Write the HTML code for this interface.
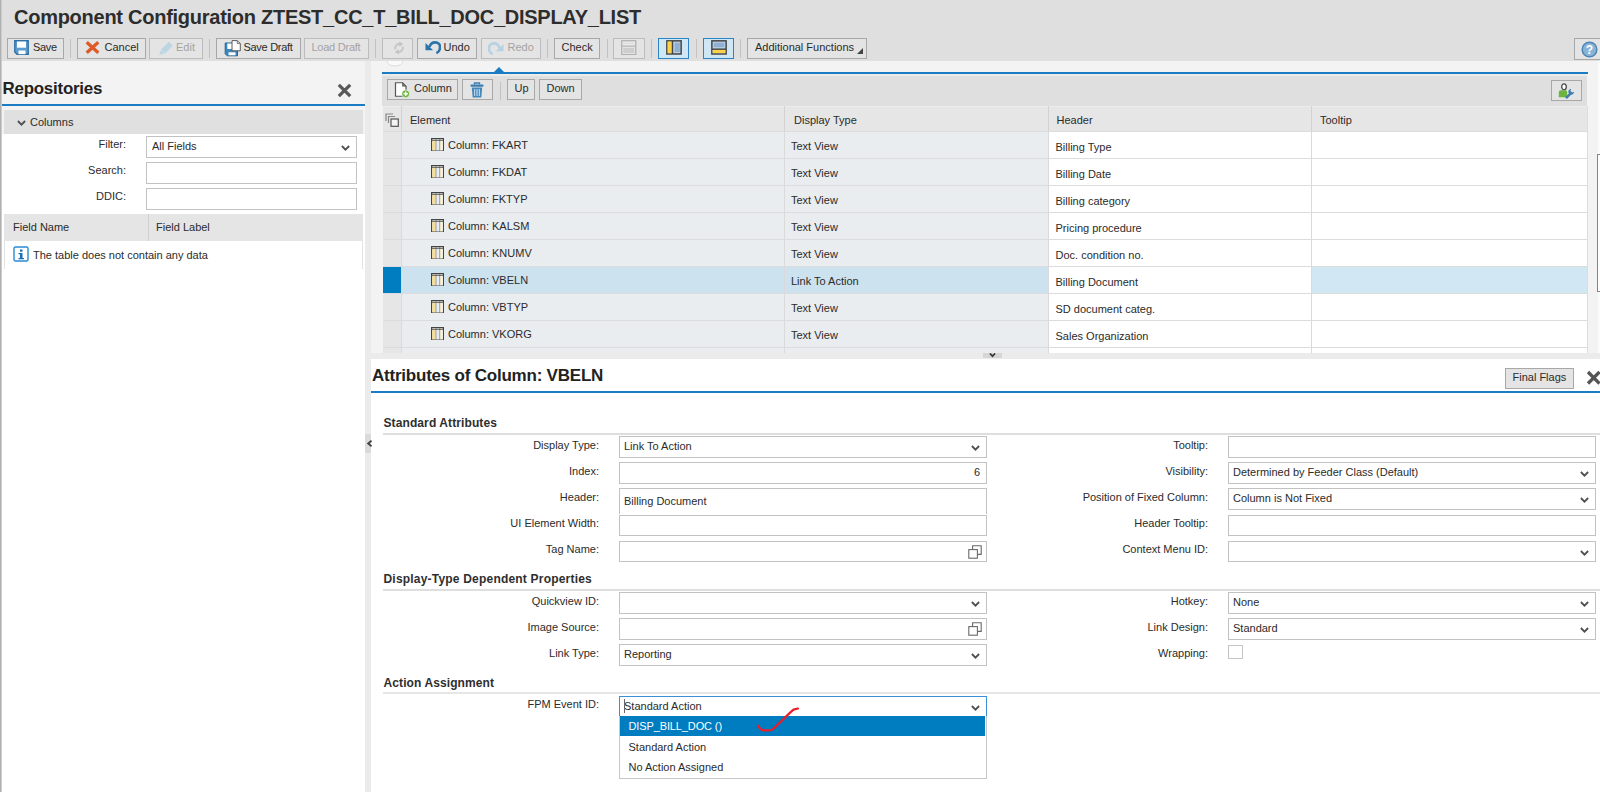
<!DOCTYPE html>
<html><head><meta charset="utf-8"><title>Component Configuration</title>
<style>
*{box-sizing:border-box;margin:0;padding:0}
html,body{width:1600px;height:792px;overflow:hidden}
body{background:#f3f3f3;font-family:"Liberation Sans",sans-serif;font-size:11px;color:#2b2b2b;position:relative}
.a{position:absolute}
.t{position:absolute;white-space:nowrap;line-height:14px;height:14px}
.btn{position:absolute;top:38px;height:21px;border:1px solid #a8a8a8;background:#e4e4e4;white-space:nowrap;line-height:17px;font-size:11px;color:#2b2b2b}
.btn span{position:absolute;top:0}
.btn.dis{border-color:#bcbcbc;color:#a3a3a3}
.btn.on{background:#cfe6f5;border-color:#2a84c6}
.sep{position:absolute;top:39px;width:1px;height:19px;background:#c2c2c2}
.inp{position:absolute;height:22px;border:1px solid #c2c2c2;background:#fff;line-height:18px;font-size:11px;padding-left:4px;white-space:nowrap}
.lbl{position:absolute;text-align:right;white-space:nowrap;line-height:14px;font-size:11px}
.sec{position:absolute;font-weight:bold;font-size:12px;letter-spacing:0.1px;white-space:nowrap;line-height:14px;color:#2e2e2e}
.hl{position:absolute;height:2px;background:#dedede}
</style></head><body>
<!-- header -->
<div class="a" style="left:0px;top:0px;width:1600px;height:61px;background:#dfdfdf"></div>
<div class="a" style="left:0px;top:0px;width:1px;height:792px;background:#b0b0b0"></div>
<div class="a" style="left:1px;top:0px;width:1px;height:792px;background:#cdcdcd"></div>
<div class="t" style="left:14px;top:4px;font-size:20px;font-weight:bold;line-height:26px;height:26px;color:#2d2d2d;letter-spacing:-0.260px">Component Configuration ZTEST_CC_T_BILL_DOC_DISPLAY_LIST</div>
<div class="btn" style="left:7px;top:38px;width:57px;height:21px"><svg class="a" style="left:6.25px;top:1.4px" width="15" height="15" viewBox="0 0 15 15"><path d="M0.750 0.750h13.500v13.500H3l-2.250-2.250z" fill="#5b9bd0" stroke="#2f6fa3" stroke-width="1.300"/><rect x="3" y="1.500" width="9" height="6.200" fill="#fff"/><rect x="4.500" y="10.500" width="7" height="3.700" fill="#fff"/></svg><span style="left:25px"><span style="position:static;letter-spacing:-0.350px">Save</span></span></div>
<div class="sep" style="left:70px;top:39px;height:19px"></div>
<div class="btn" style="left:77px;top:38px;width:69px;height:21px"><svg class="a" style="left:7.3px;top:2.3px" width="15" height="13" viewBox="0 0 15 13"><path d="M1.700 1.200L13.300 11.800M13.300 1.200L1.700 11.800" stroke="#dd5a2b" stroke-width="3.300"/></svg><span style="left:26.5px">Cancel</span></div>
<div class="btn dis" style="left:149px;top:38px;width:54px;height:21px"><svg class="a" style="left:7.5px;top:1.5px" width="16" height="15" viewBox="0 0 16 15"><path d="M1.200 13.800l1.800-5.300L10.800 0.700l4 4L7 12.500z" fill="#bdd5e3"/><path d="M3 8.500l4 4" stroke="#d9e6ee" stroke-width="0.800"/></svg><span style="left:26px">Edit</span></div>
<div class="sep" style="left:209px;top:39px;height:19px"></div>
<div class="btn" style="left:216px;top:38px;width:85px;height:21px"><svg class="a" style="left:6.5px;top:1px" width="17" height="17" viewBox="0 0 17 17"><path d="M1.200 3h12.300v12.800H3.200l-2-2z" fill="#3f86bd" stroke="#246495" stroke-width="1"/><rect x="3.300" y="3.500" width="5" height="5.500" fill="#fff"/><rect x="4.500" y="12.300" width="7" height="3" fill="#fff"/><path d="M8 0.600h5.300l3 3v7.200H8z" fill="#fff" stroke="#5a5a5a" stroke-width="1"/><path d="M13.300 0.600v3h3" fill="none" stroke="#5a5a5a" stroke-width="0.800"/></svg><span style="left:26.5px"><span style="position:static;letter-spacing:-0.300px">Save Draft</span></span></div>
<div class="btn dis" style="left:304px;top:38px;width:65px;height:21px"><span style="left:6.5px"><span style="position:static;letter-spacing:-0.250px">Load Draft</span></span></div>
<div class="sep" style="left:375px;top:39px;height:19px"></div>
<div class="btn dis" style="left:382px;top:38px;width:31px;height:21px"><svg class="a" style="left:9.5px;top:2px" width="12" height="14" viewBox="0 0 12 14"><path d="M2.300 8.300A4 4.300 0 0 1 7.500 3.200" fill="none" stroke="#c4c4c4" stroke-width="1.900"/><path d="M6.300 0.300l3.700 2.800-3.700 2.800z" fill="#c4c4c4"/><path d="M9.700 5.700A4 4.300 0 0 1 4.500 10.800" fill="none" stroke="#c4c4c4" stroke-width="1.900"/><path d="M5.700 13.700l-3.700-2.800 3.700-2.800z" fill="#c4c4c4"/></svg></div>
<div class="btn" style="left:417px;top:38px;width:60px;height:21px"><svg class="a" style="left:6.5px;top:1px" width="16" height="14" viewBox="0 0 16 14"><path d="M4.500 7C6 0.800 15.300 0.600 15 7.500C14.700 11 13 12.500 11.300 13" fill="none" stroke="#2b74ab" stroke-width="2.600"/><path d="M0.500 3v7.200h7.600z" fill="#2b74ab"/></svg><span style="left:25.5px">Undo</span></div>
<div class="btn dis" style="left:481px;top:38px;width:60px;height:21px"><svg class="a" style="left:5.5px;top:1.5px" width="16" height="14" viewBox="0 0 16 14"><path d="M11.500 7C10 0.800 0.700 0.600 1 7.500C1.300 11 3 12.500 4.700 13" fill="none" stroke="#b7d1e2" stroke-width="2.600"/><path d="M15.500 3v7.200h-7.600z" fill="#b7d1e2"/></svg><span style="left:25.5px">Redo</span></div>
<div class="sep" style="left:547px;top:39px;height:19px"></div>
<div class="btn" style="left:554px;top:38px;width:46px;height:21px"><span style="left:6.5px">Check</span></div>
<div class="sep" style="left:607px;top:39px;height:19px"></div>
<div class="btn dis" style="left:613px;top:38px;width:32px;height:21px"><svg class="a" style="left:7px;top:0.8px" width="15.5" height="15.5" viewBox="0 0 16 16"><rect x="0.750" y="0.750" width="14.500" height="14.300" fill="#e9e9e9" stroke="#b0b0b0" stroke-width="1.300"/><rect x="2.300" y="8" width="11.400" height="5.500" fill="#cdcdcd"/><path d="M0.500 6.300h15" stroke="#b0b0b0" stroke-width="1.200"/><path d="M2 3.500h12" stroke="#dcdcdc" stroke-width="1"/></svg></div>
<div class="sep" style="left:651px;top:39px;height:19px"></div>
<div class="btn on" style="left:658px;top:38px;width:31px;height:21px"><svg class="a" style="left:6.5px;top:0.8px" width="16" height="15" viewBox="0 0 17 16"><rect x="0.900" y="0.900" width="15.200" height="14" fill="#c3d6ea" stroke="#444" stroke-width="1.600"/><rect x="1.700" y="1.700" width="4.300" height="12.400" fill="#fbd24a"/><path d="M6.900 1v14" stroke="#444" stroke-width="1.600"/><rect x="9" y="2.800" width="5.800" height="10.200" fill="#8fb0d3"/></svg></div>
<div class="sep" style="left:696px;top:39px;height:19px"></div>
<div class="btn on" style="left:703px;top:38px;width:31px;height:21px"><svg class="a" style="left:6.5px;top:0.8px" width="16" height="15" viewBox="0 0 17 16"><rect x="0.900" y="0.900" width="15.200" height="14" fill="#c3d6ea" stroke="#444" stroke-width="1.600"/><rect x="2.800" y="2.800" width="11.400" height="5" fill="#8fb0d3"/><path d="M1 9.800h15" stroke="#444" stroke-width="1.600"/><rect x="1.700" y="10.600" width="13.600" height="3.400" fill="#fbd24a"/></svg></div>
<div class="sep" style="left:740px;top:39px;height:19px"></div>
<div class="btn" style="left:747px;top:38px;width:120px;height:21px"><svg class="a" style="left:108.5px;top:9.3px" width="6" height="6" viewBox="0 0 6 6"><path d="M6 0v6H0z" fill="#444"/></svg><span style="left:7px">Additional Functions</span></div>
<div class="btn" style="left:1574px;top:38px;width:27px;height:22px"><svg class="a" style="left:6px;top:1.5px" width="17" height="17" viewBox="0 0 17 17"><circle cx="8.500" cy="8.500" r="7.300" fill="#8ab4d6" stroke="#4d85b5" stroke-width="1.500"/><text x="8.500" y="13" font-size="12" font-weight="bold" text-anchor="middle" fill="#fff" font-family="Liberation Sans, sans-serif">?</text></svg></div>
<!-- left panel -->
<div class="a" style="left:2px;top:134px;width:363px;height:658px;background:#fff"></div>
<div class="a" style="left:365px;top:61px;width:6px;height:731px;background:#ebebeb"></div>
<div class="t" style="left:2.5px;top:78px;font-size:16.900px;font-weight:bold;line-height:22px;height:22px;color:#222;letter-spacing:-0.220px">Repositories</div>
<svg class="a" style="left:337.3px;top:82.5px" width="15" height="15" viewBox="0 0 15 15"><path d="M1.800 1.800l11.400 11.400M13.200 1.800L1.800 13.200" stroke="#595959" stroke-width="3.200"/></svg>
<div class="a" style="left:2px;top:104px;width:363px;height:2px;background:#1b7cc3"></div>
<div class="a" style="left:4px;top:110px;width:359px;height:24px;background:#e0e0e0"></div>
<svg class="a" style="left:17px;top:120px" width="9" height="6.5" viewBox="0 0 9 6.5"><path d="M0.900 1l3.600 3.600L8.100 1" fill="none" stroke="#505050" stroke-width="1.850"/></svg>
<div class="t" style="left:30px;top:115px">Columns</div>
<div class="lbl" style="left:26px;width:100px;top:137px">Filter:</div>
<div class="inp" style="left:146px;top:136px;width:211px;padding-left:5px">All Fields</div>
<svg class="a" style="left:340.7px;top:144.8px" width="9" height="6.5" viewBox="0 0 9 6.5"><path d="M0.900 1l3.600 3.600L8.100 1" fill="none" stroke="#505050" stroke-width="1.850"/></svg>
<div class="lbl" style="left:26px;width:100px;top:163px">Search:</div>
<div class="inp" style="left:146px;top:162px;width:211px"></div>
<div class="lbl" style="left:26px;width:100px;top:189px">DDIC:</div>
<div class="inp" style="left:146px;top:188px;width:211px"></div>
<div class="a" style="left:4px;top:214px;width:359px;height:27px;background:#e5e5e5"></div>
<div class="a" style="left:148px;top:214px;width:1px;height:27px;background:#d0d0d0"></div>
<div class="t" style="left:13px;top:220px">Field Name</div>
<div class="t" style="left:156px;top:220px">Field Label</div>
<div class="a" style="left:4px;top:241px;width:1px;height:28px;background:#e3e3e3"></div>
<div class="a" style="left:362px;top:241px;width:1px;height:28px;background:#e3e3e3"></div>
<svg class="a" style="left:13px;top:246.3px" width="16" height="16" viewBox="0 0 16 16"><rect x="1" y="1" width="14" height="14" rx="1.500" fill="#fff" stroke="#2a8ad4" stroke-width="1.400"/><rect x="7" y="3.500" width="2.500" height="2.200" fill="#1b6fb5"/><path d="M5.500 7h4v5h1.500v1.300h-5.500v-1.300h1.500v-3.700h-1.500z" fill="#1b6fb5"/></svg>
<div class="t" style="left:33px;top:247.5px">The table does not contain any data</div>
<!-- list panel -->
<div class="a" style="left:382px;top:71.5px;width:1206px;height:2px;background:#1b7cc3"></div>
<svg class="a" style="left:493px;top:66.5px" width="12" height="6" viewBox="0 0 12 6"><path d="M0 6L6 0l6 6z" fill="#1b7cc3"/></svg>
<svg class="a" style="left:386px;top:61px" width="18" height="6" viewBox="0 0 18 6"><path d="M1 0a8 5 0 0 0 16 0" fill="#fafafa" stroke="#dcdcdc" stroke-width="1"/></svg>
<div class="a" style="left:382px;top:73.5px;width:1205px;height:2px;background:#ececec"></div>
<div class="a" style="left:382px;top:75.5px;width:1205px;height:30.5px;background:#dfdfdf"></div>
<div class="btn" style="left:387px;top:79px;width:71px;height:21px"><svg class="a" style="left:6px;top:1.5px" width="16" height="16" viewBox="0 0 16 16"><path d="M1.500 0.750h7l3.500 3.500v10h-10.500z" fill="#fff" stroke="#555" stroke-width="1.200"/><path d="M8.500 0.750v3.500h3.500z" fill="#777" stroke="#555" stroke-width="0.600"/><circle cx="11.700" cy="11.800" r="3.900" fill="#6db33f" stroke="#fff" stroke-width="0.600"/><path d="M11.700 9.600v4.400M9.500 11.800h4.400" stroke="#fff" stroke-width="1.400"/></svg><span style="left:26px">Column</span></div>
<div class="btn" style="left:462px;top:79px;width:31px;height:21px"><svg class="a" style="left:7px;top:1.5px" width="14" height="16" viewBox="0 0 14 16"><path d="M4.500 2.500v-1.500h5v1.500" fill="none" stroke="#3b7db0" stroke-width="1.400"/><rect x="0.500" y="2.500" width="13" height="2.200" rx="0.800" fill="#3b7db0"/><path d="M1.800 5.500h10.400l-0.900 10h-8.600z" fill="#4487ba"/><path d="M4.700 7v7M7 7v7M9.300 7v7" stroke="#cfe3f3" stroke-width="1"/></svg></div>
<div class="sep" style="left:500px;top:82px;height:18px"></div>
<div class="btn" style="left:507px;top:79px;width:28px;height:21px"><span style="left:6.5px">Up</span></div>
<div class="btn" style="left:539px;top:79px;width:43px;height:21px"><span style="left:6.5px">Down</span></div>
<div class="btn" style="left:1551px;top:80px;width:31px;height:21px"><svg class="a" style="left:6px;top:1.5px" width="17" height="17" viewBox="0 0 17 17"><ellipse cx="6" cy="3.800" rx="2.300" ry="3" fill="#fff" stroke="#444" stroke-width="1.300"/><path d="M0.800 14.300v-5a2 2 0 0 1 2-2h4.400a2 2 0 0 1 2 2v5z" fill="#6db33f"/><path d="M8 15.200l5-5" stroke="#3b7db0" stroke-width="2.400"/><path d="M16 8.800a2.800 2.800 0 1 1-2.800-2.800l-0.800 1.700 1.700 1.700z" fill="#3b7db0"/></svg></div>
<div class="a" style="left:383px;top:106px;width:1204px;height:26px;background:#e6e6e6"></div>
<div class="a" style="left:383px;top:105.5px;width:1204px;height:1px;background:#ececec"></div>
<div class="a" style="left:401px;top:106px;width:1px;height:26px;background:#d2d2d2"></div>
<div class="a" style="left:784px;top:106px;width:1px;height:26px;background:#d2d2d2"></div>
<div class="a" style="left:1048px;top:106px;width:1px;height:26px;background:#d2d2d2"></div>
<div class="a" style="left:1311px;top:106px;width:1px;height:26px;background:#d2d2d2"></div>
<svg class="a" style="left:385px;top:113px" width="14" height="14" viewBox="0 0 14 14"><path d="M1 8V1h7" fill="none" stroke="#888" stroke-width="1.200"/><path d="M3.500 10V3.500h6.500" fill="none" stroke="#888" stroke-width="1.200"/><rect x="6" y="6" width="7.300" height="7.300" fill="#f4f4f4" stroke="#555" stroke-width="1.200"/></svg>
<div class="t" style="left:410px;top:113px">Element</div>
<div class="t" style="left:794px;top:113px">Display Type</div>
<div class="t" style="left:1056.5px;top:113px">Header</div>
<div class="t" style="left:1320px;top:113px">Tooltip</div>
<div class="a" style="left:383px;top:132px;width:18px;height:26px;background:#e6e6e6"></div>
<div class="a" style="left:402px;top:132px;width:382px;height:26px;background:#e9edf0"></div>
<div class="a" style="left:785px;top:132px;width:263px;height:26px;background:#e9edf0"></div>
<div class="a" style="left:1049px;top:132px;width:262px;height:26px;background:#fff"></div>
<div class="a" style="left:1312px;top:132px;width:275px;height:26px;background:#fff"></div>
<svg class="a" style="left:431px;top:137.8px" width="13" height="13.5" viewBox="0 0 13 13.5"><rect x="0.600" y="0.600" width="11.800" height="12.300" fill="#fffdf3" stroke="#444" stroke-width="1.200"/><rect x="1.300" y="2.800" width="3.400" height="9.500" fill="#f6df95"/><rect x="5.300" y="2.800" width="3.100" height="9.500" fill="#e6ecf5"/><rect x="9" y="2.800" width="2.800" height="9.500" fill="#faf3d6"/><path d="M5 1v11.500M8.700 1v11.500" stroke="#777" stroke-width="0.700"/><path d="M1 2.300h11" stroke="#444" stroke-width="0.900"/></svg>
<div class="t" style="left:448px;top:138px">Column: FKART</div>
<div class="t" style="left:791px;top:139px">Text View</div>
<div class="t" style="left:1055.5px;top:140px">Billing Type</div>
<div class="a" style="left:383px;top:159px;width:18px;height:26px;background:#e6e6e6"></div>
<div class="a" style="left:402px;top:159px;width:382px;height:26px;background:#e9edf0"></div>
<div class="a" style="left:785px;top:159px;width:263px;height:26px;background:#e9edf0"></div>
<div class="a" style="left:1049px;top:159px;width:262px;height:26px;background:#fff"></div>
<div class="a" style="left:1312px;top:159px;width:275px;height:26px;background:#fff"></div>
<svg class="a" style="left:431px;top:164.8px" width="13" height="13.5" viewBox="0 0 13 13.5"><rect x="0.600" y="0.600" width="11.800" height="12.300" fill="#fffdf3" stroke="#444" stroke-width="1.200"/><rect x="1.300" y="2.800" width="3.400" height="9.500" fill="#f6df95"/><rect x="5.300" y="2.800" width="3.100" height="9.500" fill="#e6ecf5"/><rect x="9" y="2.800" width="2.800" height="9.500" fill="#faf3d6"/><path d="M5 1v11.500M8.700 1v11.500" stroke="#777" stroke-width="0.700"/><path d="M1 2.300h11" stroke="#444" stroke-width="0.900"/></svg>
<div class="t" style="left:448px;top:165px">Column: FKDAT</div>
<div class="t" style="left:791px;top:166px">Text View</div>
<div class="t" style="left:1055.5px;top:167px">Billing Date</div>
<div class="a" style="left:383px;top:186px;width:18px;height:26px;background:#e6e6e6"></div>
<div class="a" style="left:402px;top:186px;width:382px;height:26px;background:#e9edf0"></div>
<div class="a" style="left:785px;top:186px;width:263px;height:26px;background:#e9edf0"></div>
<div class="a" style="left:1049px;top:186px;width:262px;height:26px;background:#fff"></div>
<div class="a" style="left:1312px;top:186px;width:275px;height:26px;background:#fff"></div>
<svg class="a" style="left:431px;top:191.8px" width="13" height="13.5" viewBox="0 0 13 13.5"><rect x="0.600" y="0.600" width="11.800" height="12.300" fill="#fffdf3" stroke="#444" stroke-width="1.200"/><rect x="1.300" y="2.800" width="3.400" height="9.500" fill="#f6df95"/><rect x="5.300" y="2.800" width="3.100" height="9.500" fill="#e6ecf5"/><rect x="9" y="2.800" width="2.800" height="9.500" fill="#faf3d6"/><path d="M5 1v11.500M8.700 1v11.500" stroke="#777" stroke-width="0.700"/><path d="M1 2.300h11" stroke="#444" stroke-width="0.900"/></svg>
<div class="t" style="left:448px;top:192px">Column: FKTYP</div>
<div class="t" style="left:791px;top:193px">Text View</div>
<div class="t" style="left:1055.5px;top:194px">Billing category</div>
<div class="a" style="left:383px;top:213px;width:18px;height:26px;background:#e6e6e6"></div>
<div class="a" style="left:402px;top:213px;width:382px;height:26px;background:#e9edf0"></div>
<div class="a" style="left:785px;top:213px;width:263px;height:26px;background:#e9edf0"></div>
<div class="a" style="left:1049px;top:213px;width:262px;height:26px;background:#fff"></div>
<div class="a" style="left:1312px;top:213px;width:275px;height:26px;background:#fff"></div>
<svg class="a" style="left:431px;top:218.8px" width="13" height="13.5" viewBox="0 0 13 13.5"><rect x="0.600" y="0.600" width="11.800" height="12.300" fill="#fffdf3" stroke="#444" stroke-width="1.200"/><rect x="1.300" y="2.800" width="3.400" height="9.500" fill="#f6df95"/><rect x="5.300" y="2.800" width="3.100" height="9.500" fill="#e6ecf5"/><rect x="9" y="2.800" width="2.800" height="9.500" fill="#faf3d6"/><path d="M5 1v11.500M8.700 1v11.500" stroke="#777" stroke-width="0.700"/><path d="M1 2.300h11" stroke="#444" stroke-width="0.900"/></svg>
<div class="t" style="left:448px;top:219px">Column: KALSM</div>
<div class="t" style="left:791px;top:220px">Text View</div>
<div class="t" style="left:1055.5px;top:221px">Pricing procedure</div>
<div class="a" style="left:383px;top:240px;width:18px;height:26px;background:#e6e6e6"></div>
<div class="a" style="left:402px;top:240px;width:382px;height:26px;background:#e9edf0"></div>
<div class="a" style="left:785px;top:240px;width:263px;height:26px;background:#e9edf0"></div>
<div class="a" style="left:1049px;top:240px;width:262px;height:26px;background:#fff"></div>
<div class="a" style="left:1312px;top:240px;width:275px;height:26px;background:#fff"></div>
<svg class="a" style="left:431px;top:245.8px" width="13" height="13.5" viewBox="0 0 13 13.5"><rect x="0.600" y="0.600" width="11.800" height="12.300" fill="#fffdf3" stroke="#444" stroke-width="1.200"/><rect x="1.300" y="2.800" width="3.400" height="9.500" fill="#f6df95"/><rect x="5.300" y="2.800" width="3.100" height="9.500" fill="#e6ecf5"/><rect x="9" y="2.800" width="2.800" height="9.500" fill="#faf3d6"/><path d="M5 1v11.500M8.700 1v11.500" stroke="#777" stroke-width="0.700"/><path d="M1 2.300h11" stroke="#444" stroke-width="0.900"/></svg>
<div class="t" style="left:448px;top:246px">Column: KNUMV</div>
<div class="t" style="left:791px;top:247px">Text View</div>
<div class="t" style="left:1055.5px;top:248px">Doc. condition no.</div>
<div class="a" style="left:383px;top:267px;width:18px;height:26px;background:#007cc0"></div>
<div class="a" style="left:402px;top:267px;width:382px;height:26px;background:#cce2ef"></div>
<div class="a" style="left:785px;top:267px;width:263px;height:26px;background:#cce2ef"></div>
<div class="a" style="left:1049px;top:267px;width:262px;height:26px;background:#fff"></div>
<div class="a" style="left:1312px;top:267px;width:275px;height:26px;background:#d1e8f4"></div>
<svg class="a" style="left:431px;top:272.8px" width="13" height="13.5" viewBox="0 0 13 13.5"><rect x="0.600" y="0.600" width="11.800" height="12.300" fill="#fffdf3" stroke="#444" stroke-width="1.200"/><rect x="1.300" y="2.800" width="3.400" height="9.500" fill="#f6df95"/><rect x="5.300" y="2.800" width="3.100" height="9.500" fill="#e6ecf5"/><rect x="9" y="2.800" width="2.800" height="9.500" fill="#faf3d6"/><path d="M5 1v11.500M8.700 1v11.500" stroke="#777" stroke-width="0.700"/><path d="M1 2.300h11" stroke="#444" stroke-width="0.900"/></svg>
<div class="t" style="left:448px;top:273px">Column: VBELN</div>
<div class="t" style="left:791px;top:274px">Link To Action</div>
<div class="t" style="left:1055.5px;top:275px">Billing Document</div>
<div class="a" style="left:383px;top:294px;width:18px;height:26px;background:#e6e6e6"></div>
<div class="a" style="left:402px;top:294px;width:382px;height:26px;background:#e9edf0"></div>
<div class="a" style="left:785px;top:294px;width:263px;height:26px;background:#e9edf0"></div>
<div class="a" style="left:1049px;top:294px;width:262px;height:26px;background:#fff"></div>
<div class="a" style="left:1312px;top:294px;width:275px;height:26px;background:#fff"></div>
<svg class="a" style="left:431px;top:299.8px" width="13" height="13.5" viewBox="0 0 13 13.5"><rect x="0.600" y="0.600" width="11.800" height="12.300" fill="#fffdf3" stroke="#444" stroke-width="1.200"/><rect x="1.300" y="2.800" width="3.400" height="9.500" fill="#f6df95"/><rect x="5.300" y="2.800" width="3.100" height="9.500" fill="#e6ecf5"/><rect x="9" y="2.800" width="2.800" height="9.500" fill="#faf3d6"/><path d="M5 1v11.500M8.700 1v11.500" stroke="#777" stroke-width="0.700"/><path d="M1 2.300h11" stroke="#444" stroke-width="0.900"/></svg>
<div class="t" style="left:448px;top:300px">Column: VBTYP</div>
<div class="t" style="left:791px;top:301px">Text View</div>
<div class="t" style="left:1055.5px;top:302px">SD document categ.</div>
<div class="a" style="left:383px;top:321px;width:18px;height:26px;background:#e6e6e6"></div>
<div class="a" style="left:402px;top:321px;width:382px;height:26px;background:#e9edf0"></div>
<div class="a" style="left:785px;top:321px;width:263px;height:26px;background:#e9edf0"></div>
<div class="a" style="left:1049px;top:321px;width:262px;height:26px;background:#fff"></div>
<div class="a" style="left:1312px;top:321px;width:275px;height:26px;background:#fff"></div>
<svg class="a" style="left:431px;top:326.8px" width="13" height="13.5" viewBox="0 0 13 13.5"><rect x="0.600" y="0.600" width="11.800" height="12.300" fill="#fffdf3" stroke="#444" stroke-width="1.200"/><rect x="1.300" y="2.800" width="3.400" height="9.500" fill="#f6df95"/><rect x="5.300" y="2.800" width="3.100" height="9.500" fill="#e6ecf5"/><rect x="9" y="2.800" width="2.800" height="9.500" fill="#faf3d6"/><path d="M5 1v11.500M8.700 1v11.500" stroke="#777" stroke-width="0.700"/><path d="M1 2.300h11" stroke="#444" stroke-width="0.900"/></svg>
<div class="t" style="left:448px;top:327px">Column: VKORG</div>
<div class="t" style="left:791px;top:328px">Text View</div>
<div class="t" style="left:1055.5px;top:329px">Sales Organization</div>
<div class="a" style="left:383px;top:348px;width:18px;height:5px;background:#e6e6e6"></div>
<div class="a" style="left:402px;top:348px;width:382px;height:5px;background:#e9edf0"></div>
<div class="a" style="left:785px;top:348px;width:263px;height:5px;background:#e9edf0"></div>
<div class="a" style="left:1049px;top:348px;width:262px;height:5px;background:#fff"></div>
<div class="a" style="left:1312px;top:348px;width:275px;height:5px;background:#fff"></div>
<div class="a" style="left:383px;top:131px;width:1204px;height:1px;background:#dcdcdc"></div>
<div class="a" style="left:383px;top:158px;width:1204px;height:1px;background:#dcdcdc"></div>
<div class="a" style="left:383px;top:185px;width:1204px;height:1px;background:#dcdcdc"></div>
<div class="a" style="left:383px;top:212px;width:1204px;height:1px;background:#dcdcdc"></div>
<div class="a" style="left:383px;top:239px;width:1204px;height:1px;background:#dcdcdc"></div>
<div class="a" style="left:383px;top:266px;width:1204px;height:1px;background:#dcdcdc"></div>
<div class="a" style="left:383px;top:293px;width:1204px;height:1px;background:#dcdcdc"></div>
<div class="a" style="left:383px;top:320px;width:1204px;height:1px;background:#dcdcdc"></div>
<div class="a" style="left:383px;top:347px;width:1204px;height:1px;background:#dcdcdc"></div>
<div class="a" style="left:401px;top:132px;width:1px;height:221px;background:#dadada"></div>
<div class="a" style="left:784px;top:132px;width:1px;height:221px;background:#dadada"></div>
<div class="a" style="left:1048px;top:132px;width:1px;height:221px;background:#dadada"></div>
<div class="a" style="left:1311px;top:132px;width:1px;height:221px;background:#dadada"></div>
<div class="a" style="left:1587px;top:106px;width:1px;height:247px;background:#dcdcdc"></div>
<div class="a" style="left:1597.5px;top:61px;width:3px;height:292px;background:#fbfbfb"></div>
<div class="a" style="left:1597px;top:154px;width:4px;height:138px;background:#fff;border:1px solid #858585"></div>
<div class="a" style="left:371px;top:353px;width:1229px;height:6px;background:#ebebeb"></div>
<div class="a" style="left:983px;top:353px;width:19px;height:5px;background:#d6d6d6"></div>
<svg class="a" style="left:988px;top:353px" width="9" height="5" viewBox="0 0 9 5"><path d="M1.900 0.500l2.600 2.700 2.600-2.700" fill="none" stroke="#3a3a3a" stroke-width="1.700"/></svg>
<!-- attributes panel -->
<div class="a" style="left:371px;top:359px;width:1229px;height:433px;background:#fff"></div>
<div class="a" style="left:365px;top:434px;width:6px;height:19px;background:#dadada"></div>
<svg class="a" style="left:366.5px;top:439.5px" width="5" height="7" viewBox="0 0 5 7"><path d="M4.600 0.700L1.300 3.500l3.300 2.800" fill="none" stroke="#444" stroke-width="1.900"/></svg>
<div class="t" style="left:372px;top:365px;font-size:17px;font-weight:bold;line-height:22px;height:22px;color:#222;letter-spacing:-0.220px">Attributes of Column: VBELN</div>
<div class="a" style="left:371px;top:391px;width:1229px;height:2px;background:#1b7cc3"></div>
<div class="btn" style="left:1505px;top:368px;width:69px;height:21px"><span style="left:6.5px">Final Flags</span></div>
<svg class="a" style="left:1586px;top:370px" width="16" height="15" viewBox="0 0 16 15"><path d="M2 2l11.500 11.500M13.500 2L2 13.500" stroke="#555" stroke-width="3.300"/></svg>
<div class="sec" style="left:383.500px;top:416px;letter-spacing:0.1px">Standard Attributes</div>
<div class="hl" style="left:383px;top:433px;width:1217px;background:#dedede"></div>
<div class="lbl" style="left:399px;width:200px;top:438px">Display Type:</div>
<div class="inp" style="left:619px;top:436px;width:368px;height:22px">Link To Action</div>
<svg class="a" style="left:970.7px;top:444.8px" width="9" height="6.5" viewBox="0 0 9 6.5"><path d="M0.900 1l3.600 3.600L8.100 1" fill="none" stroke="#505050" stroke-width="1.850"/></svg>
<div class="lbl" style="left:399px;width:200px;top:464px">Index:</div>
<div class="inp" style="left:619px;top:462px;width:368px;height:22px;text-align:right;padding-right:6px">6</div>
<div class="lbl" style="left:399px;width:200px;top:490px">Header:</div>
<div class="inp" style="left:619px;top:488px;width:368px;height:26px;border-bottom:none;padding-top:3px">Billing Document</div>
<div class="lbl" style="left:399px;width:200px;top:516px">UI Element Width:</div>
<div class="inp" style="left:619px;top:515px;width:368px;height:21px"></div>
<div class="lbl" style="left:399px;width:200px;top:542px">Tag Name:</div>
<div class="inp" style="left:619px;top:541px;width:368px;height:21px"></div>
<svg class="a" style="left:968px;top:544.5px" width="14" height="14" viewBox="0 0 14 14"><path d="M4.600 4.600v-3.800h8.600v8.600h-3.800" fill="none" stroke="#6a6a6a" stroke-width="1.100"/><rect x="0.800" y="4.600" width="8.600" height="8.600" fill="#fff" stroke="#6a6a6a" stroke-width="1.100"/></svg>
<div class="lbl" style="left:1008px;width:200px;top:438px">Tooltip:</div>
<div class="inp" style="left:1228px;top:436px;width:368px;height:22px"></div>
<div class="lbl" style="left:1008px;width:200px;top:464px">Visibility:</div>
<div class="inp" style="left:1228px;top:462px;width:368px;height:22px">Determined by Feeder Class (Default)</div>
<svg class="a" style="left:1579.7px;top:470.8px" width="9" height="6.5" viewBox="0 0 9 6.5"><path d="M0.900 1l3.600 3.600L8.100 1" fill="none" stroke="#505050" stroke-width="1.850"/></svg>
<div class="lbl" style="left:1008px;width:200px;top:490px">Position of Fixed Column:</div>
<div class="inp" style="left:1228px;top:488px;width:368px;height:22px">Column is Not Fixed</div>
<svg class="a" style="left:1579.7px;top:496.8px" width="9" height="6.5" viewBox="0 0 9 6.5"><path d="M0.900 1l3.600 3.600L8.100 1" fill="none" stroke="#505050" stroke-width="1.850"/></svg>
<div class="lbl" style="left:1008px;width:200px;top:516px">Header Tooltip:</div>
<div class="inp" style="left:1228px;top:515px;width:368px;height:21px"></div>
<div class="lbl" style="left:1008px;width:200px;top:542px">Context Menu ID:</div>
<div class="inp" style="left:1228px;top:541px;width:368px;height:21px"></div>
<svg class="a" style="left:1579.7px;top:549.8px" width="9" height="6.5" viewBox="0 0 9 6.5"><path d="M0.900 1l3.600 3.600L8.100 1" fill="none" stroke="#505050" stroke-width="1.850"/></svg>
<div class="sec" style="left:383.500px;top:572px;letter-spacing:0.2px">Display-Type Dependent Properties</div>
<div class="hl" style="left:383px;top:588.5px;width:1217px;background:#dedede"></div>
<div class="lbl" style="left:399px;width:200px;top:594px">Quickview ID:</div>
<div class="inp" style="left:619px;top:592px;width:368px;height:22px"></div>
<svg class="a" style="left:970.7px;top:600.8px" width="9" height="6.5" viewBox="0 0 9 6.5"><path d="M0.900 1l3.600 3.600L8.100 1" fill="none" stroke="#505050" stroke-width="1.850"/></svg>
<div class="lbl" style="left:399px;width:200px;top:620px">Image Source:</div>
<div class="inp" style="left:619px;top:618px;width:368px;height:22px"></div>
<svg class="a" style="left:968px;top:621.5px" width="14" height="14" viewBox="0 0 14 14"><path d="M4.600 4.600v-3.800h8.600v8.600h-3.800" fill="none" stroke="#6a6a6a" stroke-width="1.100"/><rect x="0.800" y="4.600" width="8.600" height="8.600" fill="#fff" stroke="#6a6a6a" stroke-width="1.100"/></svg>
<div class="lbl" style="left:399px;width:200px;top:646px">Link Type:</div>
<div class="inp" style="left:619px;top:644px;width:368px;height:22px">Reporting</div>
<svg class="a" style="left:970.7px;top:652.8px" width="9" height="6.5" viewBox="0 0 9 6.5"><path d="M0.900 1l3.600 3.600L8.100 1" fill="none" stroke="#505050" stroke-width="1.850"/></svg>
<div class="lbl" style="left:1008px;width:200px;top:594px">Hotkey:</div>
<div class="inp" style="left:1228px;top:592px;width:368px;height:22px">None</div>
<svg class="a" style="left:1579.7px;top:600.8px" width="9" height="6.5" viewBox="0 0 9 6.5"><path d="M0.900 1l3.600 3.600L8.100 1" fill="none" stroke="#505050" stroke-width="1.850"/></svg>
<div class="lbl" style="left:1008px;width:200px;top:620px">Link Design:</div>
<div class="inp" style="left:1228px;top:618px;width:368px;height:22px">Standard</div>
<svg class="a" style="left:1579.7px;top:626.8px" width="9" height="6.5" viewBox="0 0 9 6.5"><path d="M0.900 1l3.600 3.600L8.100 1" fill="none" stroke="#505050" stroke-width="1.850"/></svg>
<div class="lbl" style="left:1008px;width:200px;top:646px">Wrapping:</div>
<div class="a" style="left:1228px;top:645px;width:15px;height:14px;border:1px solid #c4c4c4;background:#fff"></div>
<div class="sec" style="left:383.500px;top:675.5px;letter-spacing:0.1px">Action Assignment</div>
<div class="hl" style="left:383px;top:691.5px;width:1217px;background:#e6e6e6"></div>
<div class="lbl" style="left:399px;width:200px;top:697px">FPM Event ID:</div>
<div class="inp" style="left:619px;top:696px;width:368px;height:21px;border-color:#3a8fd6;padding-left:4px">Standard Action</div>
<svg class="a" style="left:970.7px;top:704.8px" width="9" height="6.5" viewBox="0 0 9 6.5"><path d="M0.900 1l3.600 3.600L8.100 1" fill="none" stroke="#505050" stroke-width="1.850"/></svg>
<div class="a" style="left:624px;top:699px;width:1px;height:14px;background:#666"></div>
<div class="a" style="left:619px;top:716px;width:368px;height:63px;background:#fff;border:1px solid #c6c6c6;border-top:none"></div>
<div class="a" style="left:620px;top:716px;width:365px;height:20px;background:#007cc0"></div>
<div class="t" style="left:628.5px;top:719px;color:#fff;letter-spacing:-0.120px">DISP_BILL_DOC ()</div>
<div class="t" style="left:628.5px;top:740px">Standard Action</div>
<div class="t" style="left:628.5px;top:760px">No Action Assigned</div>
<svg class="a" style="left:755px;top:705px" width="48" height="30" viewBox="0 0 48 30"><path d="M3.200 21C4.500 23 5 24.300 7 24.800C10 25.400 14 25.500 16.700 25C24 19 31 11 38.500 4.600L43 3.500" fill="none" stroke="#ee1c25" stroke-width="2.200" stroke-linecap="round" stroke-linejoin="round"/></svg>
</body></html>
